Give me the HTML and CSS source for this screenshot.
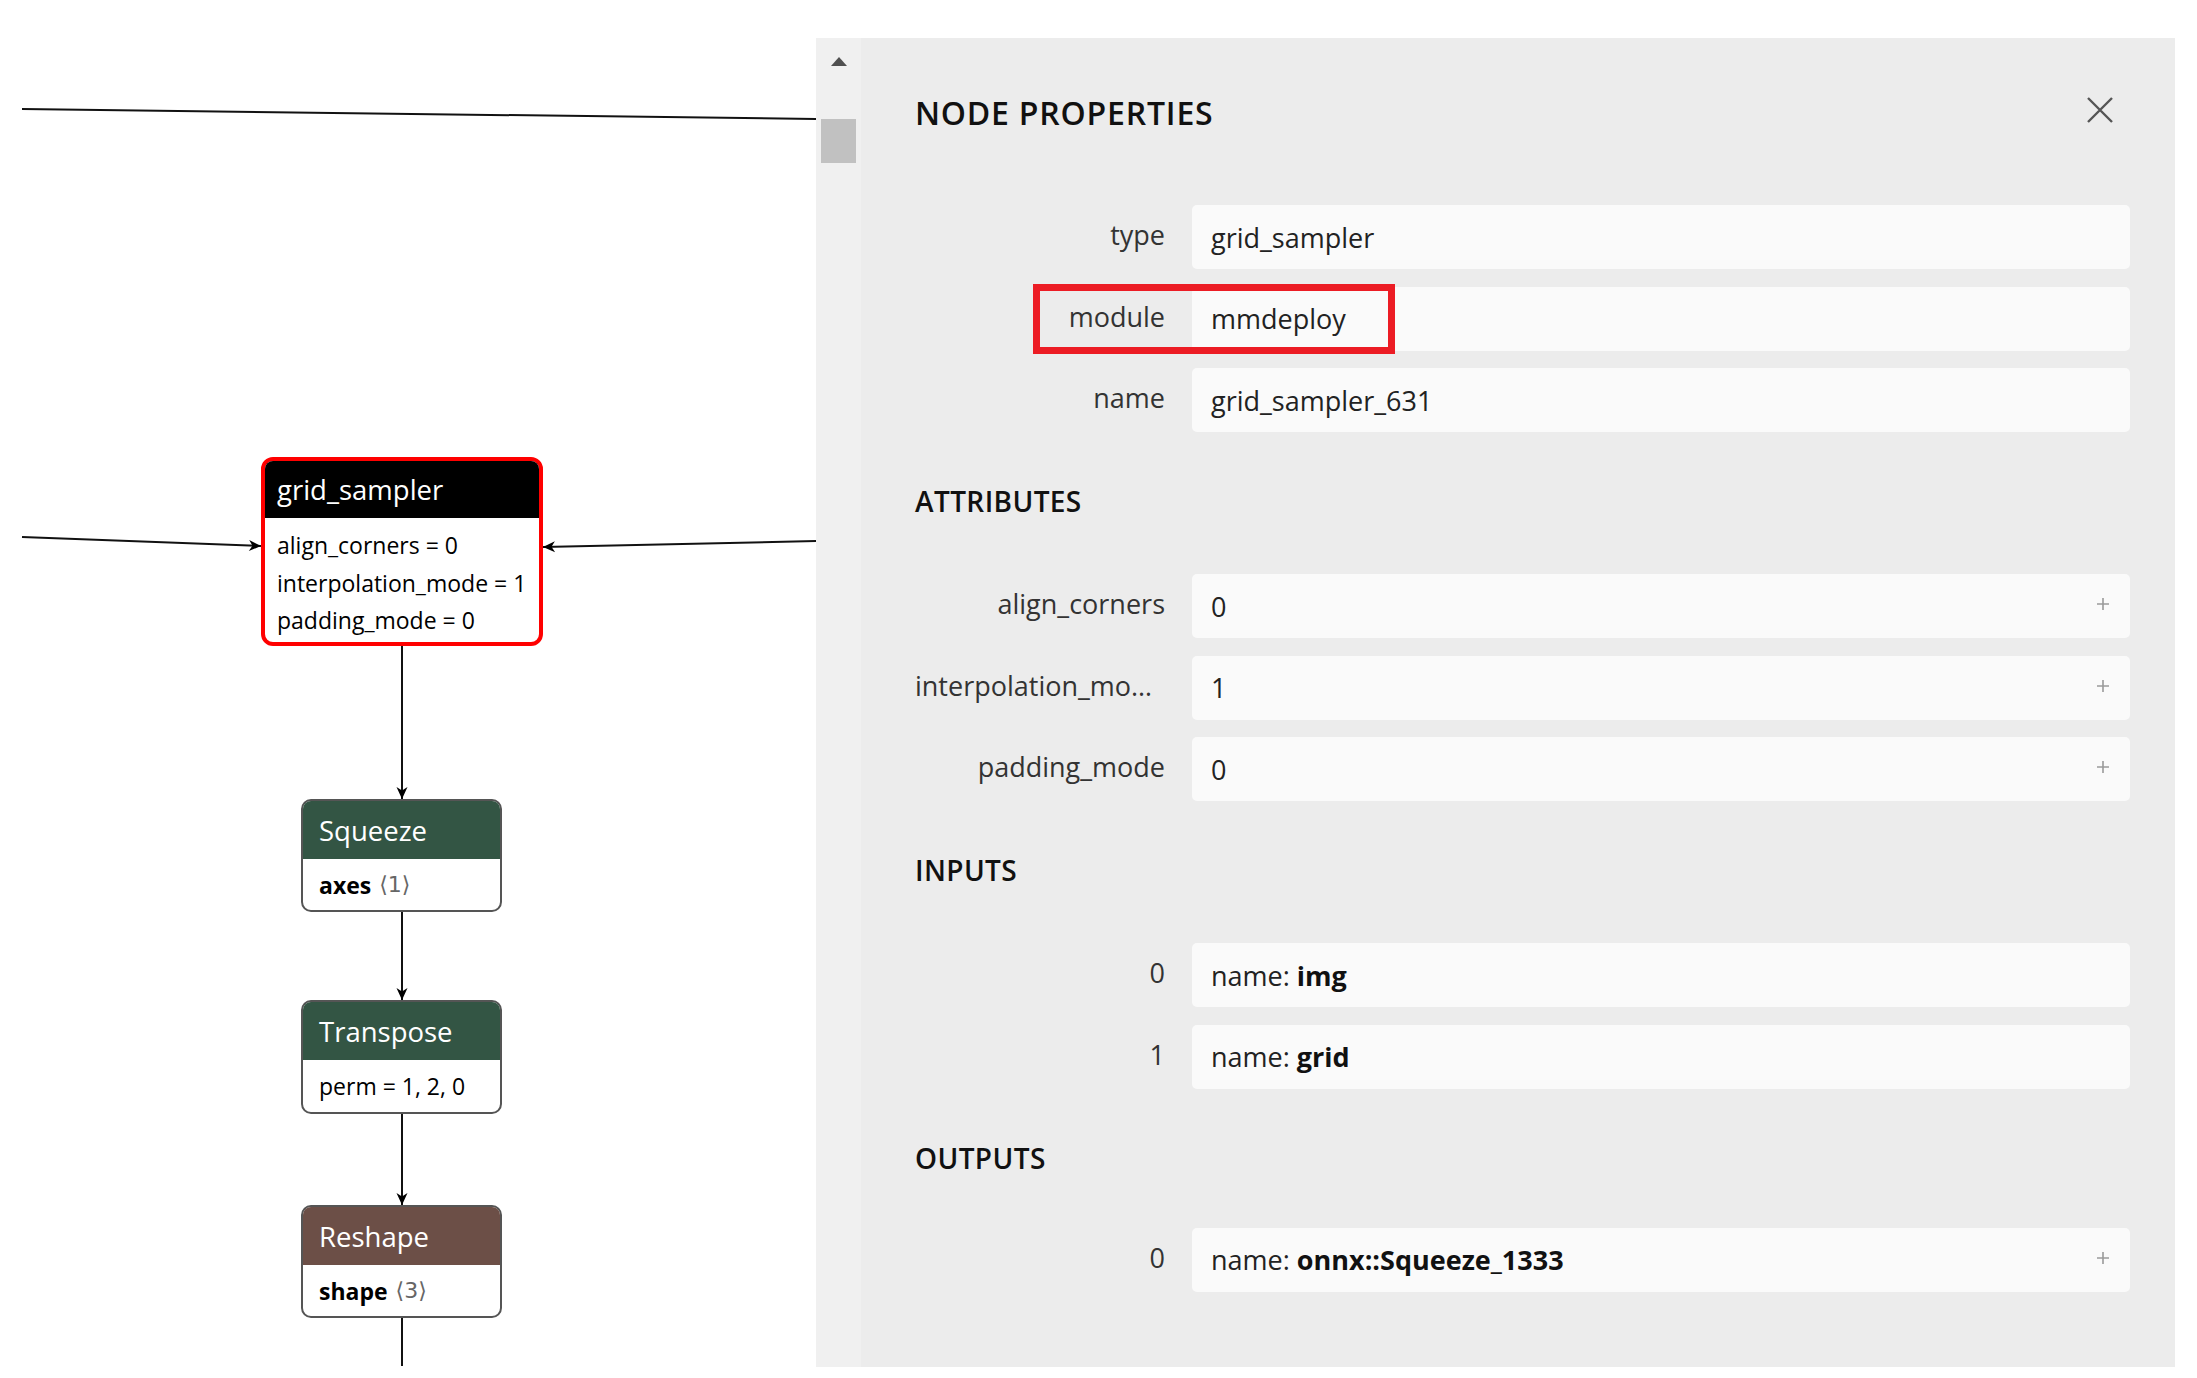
FILE: index.html
```html
<!DOCTYPE html>
<html lang="en">
<head>
<meta charset="utf-8">
<title>Node Properties</title>
<link rel="stylesheet" href="styles.css">
</head>
<body>
<div class="app">
  <div class="canvas">
    <svg class="edges" width="816" height="1366" viewBox="0 0 816 1366">
      <defs>
        <marker id="arr" markerUnits="userSpaceOnUse" markerWidth="14" markerHeight="14" refX="13" refY="7" orient="auto">
          <path d="M1,1.5 L13,7 L1,12.5 L4.5,7 z" fill="#000"/>
        </marker>
      </defs>
      <line x1="22" y1="109" x2="816" y2="119"/>
      <line x1="22" y1="537" x2="261" y2="546" marker-end="url(#arr)"/>
      <line x1="816" y1="541" x2="543" y2="547" marker-end="url(#arr)"/>
      <line x1="402" y1="646" x2="402" y2="799" marker-end="url(#arr)"/>
      <line x1="402" y1="912" x2="402" y2="1000" marker-end="url(#arr)"/>
      <line x1="402" y1="1114" x2="402" y2="1205" marker-end="url(#arr)"/>
      <line x1="402" y1="1318" x2="402" y2="1366"/>
    </svg>

    <div class="node node-selected n-grid">
      <div class="node-head head-black">grid_sampler</div>
      <div class="node-body">
        <div class="attr">align_corners = 0</div>
        <div class="attr">interpolation_mode = 1</div>
        <div class="attr">padding_mode = 0</div>
      </div>
    </div>

    <div class="node n-squeeze">
      <div class="node-head head-green">Squeeze</div>
      <div class="node-body single"><b>axes</b> <span class="shape">⟨1⟩</span></div>
    </div>

    <div class="node n-transpose">
      <div class="node-head head-green">Transpose</div>
      <div class="node-body single">perm = 1, 2, 0</div>
    </div>

    <div class="node n-reshape">
      <div class="node-head head-brown">Reshape</div>
      <div class="node-body single"><b>shape</b> <span class="shape">⟨3⟩</span></div>
    </div>
  </div>

  <aside class="sidebar">
    <div class="scrollbar">
      <span class="scroll-up"></span>
      <span class="scroll-thumb"></span>
    </div>
    <div class="panel">
      <div class="panel-header">
        <h1 class="panel-title">NODE PROPERTIES</h1>
        <button class="close" aria-label="Close">
          <svg width="28" height="28" viewBox="0 0 28 28"><path d="M2 2 L26 26 M26 2 L2 26" stroke="#555" stroke-width="2.4" fill="none"/></svg>
        </button>
      </div>

      <div class="props">
        <div class="row"><div class="label">type</div><div class="value">grid_sampler</div></div>
        <div class="row row-marked"><div class="label">module</div><div class="value">mmdeploy</div><span class="highlight"></span></div>
        <div class="row"><div class="label">name</div><div class="value">grid_sampler_631</div></div>
      </div>

      <h2 class="section">ATTRIBUTES</h2>
      <div class="props">
        <div class="row"><div class="label">align_corners</div><div class="value"><span>0</span><svg class="plus" width="14" height="14" viewBox="0 0 14 14"><path d="M7 1 V13 M1 7 H13"/></svg></div></div>
        <div class="row"><div class="label label-left" title="interpolation_mode">interpolation_mo…</div><div class="value"><span>1</span><svg class="plus" width="14" height="14" viewBox="0 0 14 14"><path d="M7 1 V13 M1 7 H13"/></svg></div></div>
        <div class="row"><div class="label">padding_mode</div><div class="value"><span>0</span><svg class="plus" width="14" height="14" viewBox="0 0 14 14"><path d="M7 1 V13 M1 7 H13"/></svg></div></div>
      </div>

      <h2 class="section">INPUTS</h2>
      <div class="props">
        <div class="row"><div class="label">0</div><div class="value"><span>name: <b>img</b></span></div></div>
        <div class="row"><div class="label">1</div><div class="value"><span>name: <b>grid</b></span></div></div>
      </div>

      <h2 class="section section-last">OUTPUTS</h2>
      <div class="props">
        <div class="row"><div class="label">0</div><div class="value"><span>name: <b>onnx::Squeeze_1333</b></span><svg class="plus" width="14" height="14" viewBox="0 0 14 14"><path d="M7 1 V13 M1 7 H13"/></svg></div></div>
      </div>
    </div>
  </aside>
</div>
</body>
</html>
```

FILE: styles.css
```css
* { box-sizing: border-box; }

html, body {
  margin: 0;
  padding: 0;
  background: #ffffff;
}

body {
  font-family: "Open Sans", "Noto Sans", "DejaVu Sans", sans-serif;
  color: #222;
  width: 2197px;
  height: 1378px;
  overflow: hidden;
}

.app {
  display: flex;
  align-items: flex-start;
  height: 1378px;
}

/* ---------- graph canvas ---------- */
.canvas {
  position: relative;
  flex: none;
  width: 816px;
  height: 1366px;
  background: #fff;
}

.edges {
  position: absolute;
  left: 0;
  top: 0;
}

.edges line {
  stroke: #111;
  stroke-width: 2;
  fill: none;
}

.node {
  position: absolute;
  background: #fff;
  border: 2px solid #555;
  border-radius: 10px;
  overflow: hidden;
  display: flex;
  flex-direction: column;
}

.node-head {
  color: #fff;
  font-size: 27.5px;
  display: flex;
  align-items: center;
  padding-left: 16px;
}

.head-black { background: #000; }
.head-green { background: #335544; }
.head-brown { background: #6c4f47; }

.node-body {
  font-size: 23px;
  color: #000;
  padding: 0 14px;
  white-space: nowrap;
}

.node-body b { font-weight: 700; }

.node-body.single {
  flex: 1;
  display: flex;
  align-items: center;
  padding-left: 16px;
  gap: 8px;
}

.shape {
  color: #666;
  font-family: "DejaVu Sans", sans-serif;
  font-size: 22px;
}

.node-selected {
  border: 4px solid #f00;
  border-radius: 12px;
}

.node-selected .node-head {
  padding-left: 12px;
}

.node-selected .node-body {
  padding: 9px 10px 0 12px;
}

.attr {
  line-height: 37.5px;
}

.n-grid { left: 261px; top: 457px; width: 282px; height: 189px; }
.n-grid .node-head { height: 57px; }

.n-squeeze { left: 301px; top: 799px; width: 201px; height: 113px; }
.n-transpose { left: 301px; top: 1000px; width: 201px; height: 114px; }
.n-reshape { left: 301px; top: 1205px; width: 201px; height: 113px; }
.n-squeeze .node-head,
.n-transpose .node-head,
.n-reshape .node-head { height: 58px; }

/* ---------- sidebar ---------- */
.sidebar {
  flex: none;
  width: 1359px;
  height: 1329px;
  margin-top: 38px;
  display: flex;
}

.scrollbar {
  flex: none;
  width: 45px;
  background: #f0f0f0;
  display: flex;
  flex-direction: column;
  align-items: center;
}

.scroll-up {
  margin-top: 19px;
  width: 0;
  height: 0;
  border-left: 8px solid transparent;
  border-right: 8px solid transparent;
  border-bottom: 9px solid #505050;
}

.scroll-thumb {
  margin-top: 53px;
  width: 35px;
  height: 44px;
  background: #c1c1c1;
}

.panel {
  flex: 1;
  background: #ececec;
  padding: 55px 45px 0 54px;
}

.panel-header {
  display: flex;
  justify-content: space-between;
  align-items: flex-start;
  height: 40px;
}

.panel-title {
  margin: 0;
  font-size: 32px;
  line-height: 40px;
  font-weight: 600;
  color: #111;
  letter-spacing: 0.8px;
}

.close {
  margin: 3px 16px 0 0;
  padding: 0;
  border: 0;
  background: none;
  width: 28px;
  height: 28px;
  display: block;
}

.close svg { display: block; }

.props {
  display: flex;
  flex-direction: column;
  gap: 17.5px;
}

.panel-header + .props { margin-top: 72px; }

.row {
  position: relative;
  display: flex;
  height: 64px;
}

.label {
  flex: none;
  width: 250px;
  margin-right: 27px;
  text-align: right;
  font-size: 27px;
  line-height: 59px;
  color: #333;
  white-space: nowrap;
}

.label-left {
  text-align: left;
}

.value {
  flex: 1;
  background: #fafafa;
  border-radius: 5px;
  display: flex;
  align-items: center;
  justify-content: space-between;
  padding: 0 20px 0 19px;
  font-size: 27px;
  color: #222;
  white-space: nowrap;
}

.value b { font-weight: 700; color: #111; }

.plus {
  margin-bottom: 4px;
}

.plus path {
  stroke: #9a9a9a;
  stroke-width: 1.6;
  fill: none;
}

.section {
  margin: 49px 0 53px;
  font-size: 28px;
  line-height: 40px;
  font-weight: 600;
  color: #111;
  letter-spacing: 0.4px;
}

.section-last { margin-bottom: 50px; }

.highlight {
  position: absolute;
  left: 118px;
  top: -3px;
  width: 362px;
  height: 70px;
  border: 7px solid #ec1c24;
  pointer-events: none;
}
```
